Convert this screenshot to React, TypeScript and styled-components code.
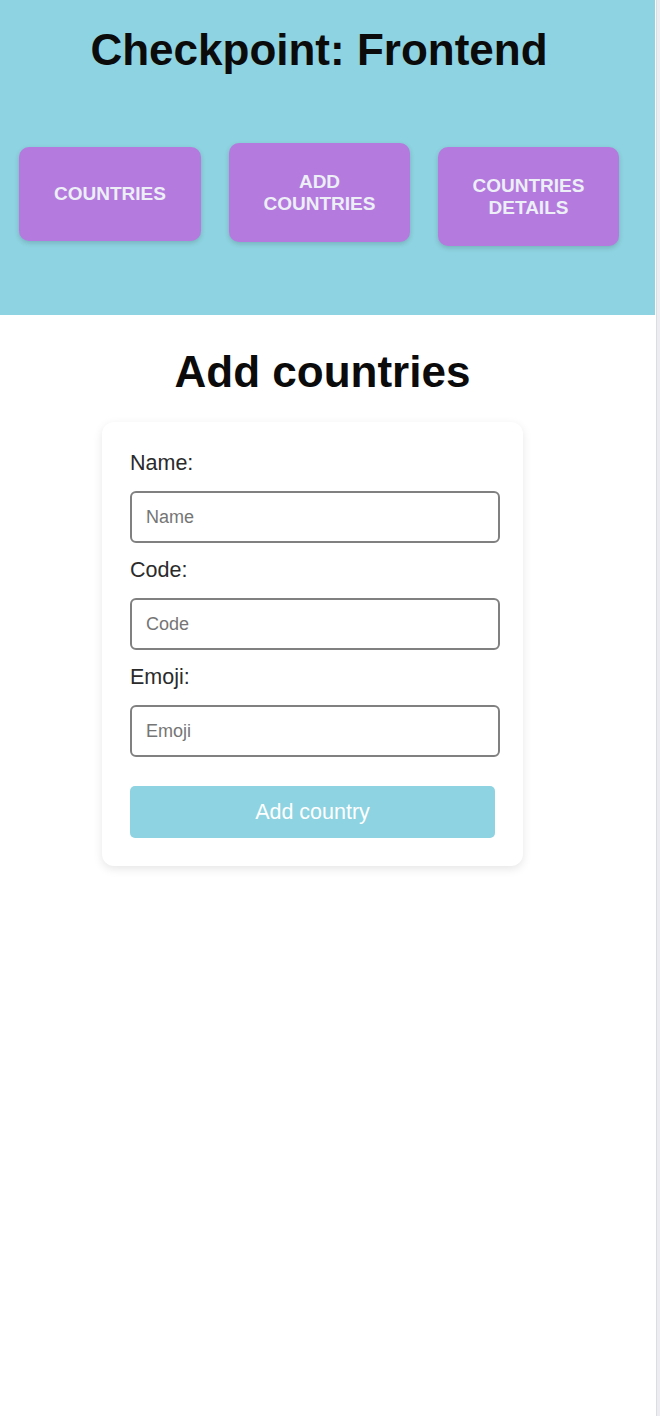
import React from 'react';
import styled, { createGlobalStyle } from 'styled-components';

const GlobalStyle = createGlobalStyle`
  html, body {
    margin: 0;
    padding: 0;
    background: #ffffff;
  }

  body {
    font-family: 'Liberation Sans', Arial, Helvetica, sans-serif;
  }

  * {
    box-sizing: border-box;
  }
`;

type NavItem = {
  label: string[];
  offset: number;
  height: number;
  width: number;
};

const navItems: NavItem[] = [
  { label: ['COUNTRIES'], offset: 4, height: 94, width: 182 },
  { label: ['ADD', 'COUNTRIES'], offset: 0, height: 99, width: 181 },
  { label: ['COUNTRIES', 'DETAILS'], offset: 4, height: 99, width: 181 },
];

const fields = [
  { id: 'name', label: 'Name:', placeholder: 'Name' },
  { id: 'code', label: 'Code:', placeholder: 'Code' },
  { id: 'emoji', label: 'Emoji:', placeholder: 'Emoji' },
];

const App = () => {
  const [values, setValues] = React.useState<Record<string, string>>({
    name: '',
    code: '',
    emoji: '',
  });

  const onChange = (id: string) => (e: React.ChangeEvent<HTMLInputElement>) => {
    setValues({ ...values, [id]: e.target.value });
  };

  return (
    <>
      <GlobalStyle />
      <Page>
        <Main>
          <Header>
            <HeaderInner>
              <Title>Checkpoint: Frontend</Title>
              <NavRow>
                {navItems.map((item) => (
                  <NavButton
                    key={item.label.join(' ')}
                    $offset={item.offset}
                    $height={item.height}
                    $width={item.width}
                  >
                    {item.label.map((line) => (
                      <span key={line}>{line}</span>
                    ))}
                  </NavButton>
                ))}
              </NavRow>
            </HeaderInner>
          </Header>

          <Section>
            <Heading>Add countries</Heading>
            <Card onSubmit={(e) => e.preventDefault()}>
              {fields.map((field) => (
                <Field key={field.id}>
                  <Label htmlFor={field.id}>{field.label}</Label>
                  <Input
                    id={field.id}
                    placeholder={field.placeholder}
                    value={values[field.id]}
                    onChange={onChange(field.id)}
                  />
                </Field>
              ))}
              <SubmitButton type="submit">Add country</SubmitButton>
            </Card>
          </Section>
        </Main>
        <Rail />
      </Page>
    </>
  );
};

export default App;

const Page = styled.div`
  display: flex;
  min-height: 100vh;
  width: 660px;
`;

const Main = styled.main`
  flex: 1;
  min-width: 0;
`;

const Rail = styled.div`
  width: 5px;
  flex-shrink: 0;
  background: #ececf1;
  border-left: 1px solid #ffffff;
  box-shadow: inset 1px 0 0 #dcdce3;
`;

const Header = styled.header`
  height: 315px;
  background: #8ed3e1;
`;

const HeaderInner = styled.div`
  width: 638px;
  padding-top: 25px;
`;

const Title = styled.h1`
  margin: 0;
  font-size: 44px;
  line-height: 50px;
  font-weight: 700;
  color: #0b0b0b;
  text-align: center;
`;

const NavRow = styled.nav`
  display: flex;
  align-items: flex-start;
  gap: 28px;
  margin-top: 68px;
  padding-left: 19px;
`;

const NavButton = styled.button<{ $offset: number; $height: number; $width: number }>`
  display: flex;
  flex-direction: column;
  align-items: center;
  justify-content: center;
  width: ${(p) => p.$width}px;
  height: ${(p) => p.$height}px;
  margin-top: ${(p) => p.$offset}px;
  padding: 0;
  border: none;
  border-radius: 10px;
  background: #b57ade;
  box-shadow: 0 2px 5px rgba(0, 0, 0, 0.16);
  color: #eceff5;
  font-family: inherit;
  font-size: 19px;
  font-weight: 700;
  line-height: 22px;
  cursor: pointer;
`;

const Section = styled.section`
  padding-top: 32px;
`;

const Heading = styled.h2`
  margin: 0;
  padding-right: 10px;
  font-size: 44px;
  line-height: 50px;
  font-weight: 700;
  color: #0b0b0b;
  text-align: center;
`;

const Card = styled.form`
  width: 421px;
  margin: 25px 0 0 102px;
  padding: 29px 28px 28px;
  background: #ffffff;
  border-radius: 12px;
  box-shadow: 0 3px 10px rgba(0, 0, 0, 0.1);
`;

const Field = styled.div`
  margin-bottom: 15px;
`;

const Label = styled.label`
  display: block;
  margin-bottom: 16px;
  font-size: 21.5px;
  line-height: 24px;
  color: #2b2b2b;
`;

const Input = styled.input`
  display: block;
  width: calc(100% + 5px);
  height: 52px;
  padding: 0 14px;
  border: 2px solid #808080;
  border-radius: 6px;
  background: #ffffff;
  font-family: inherit;
  font-size: 18px;
  color: #222;
  outline: none;

  &::placeholder {
    color: #757575;
  }
`;

const SubmitButton = styled.button`
  display: block;
  width: 100%;
  height: 52px;
  margin-top: 29px;
  border: none;
  border-radius: 5px;
  background: #8ed3e1;
  color: #ffffff;
  font-family: inherit;
  font-size: 21.5px;
  cursor: pointer;
`;
